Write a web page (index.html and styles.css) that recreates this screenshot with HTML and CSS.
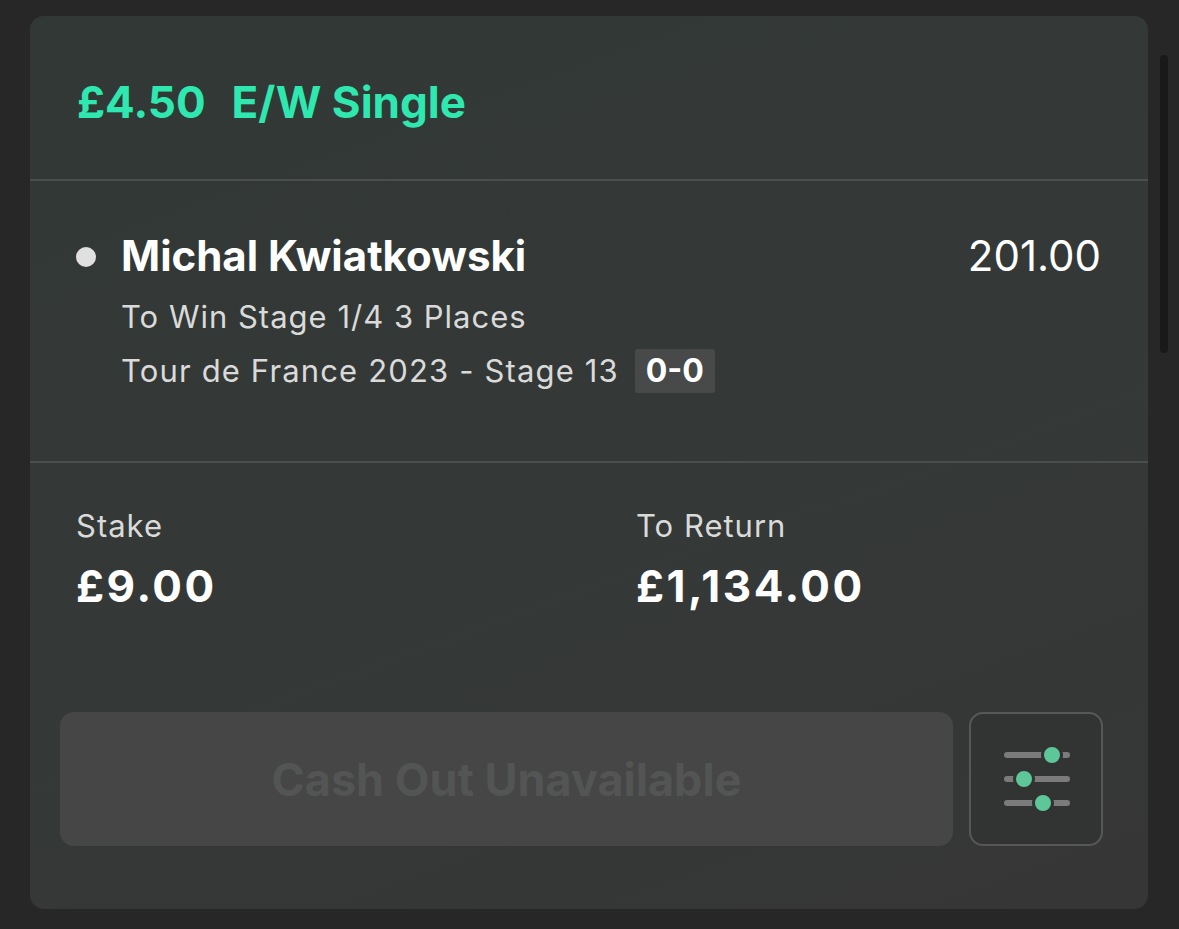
FILE: index.html
```html
<!DOCTYPE html>
<html lang="en">
<head>
<meta charset="utf-8">
<title>E/W Single</title>
<link rel="stylesheet" href="styles.css">
</head>
<body>
<div class="page">
  <div class="card">
    <div class="header">
      <span class="amount">£4.50</span><span class="type">E/W Single</span>
    </div>
    <div class="selection">
      <div class="dot"></div>
      <div class="info">
        <div class="name-row">
          <span class="name">Michal Kwiatkowski</span>
          <span class="odds">201.00</span>
        </div>
        <div class="market">To Win Stage 1/4 3 Places</div>
        <div class="event">Tour de France 2023 - Stage 13<span class="score">0-0</span></div>
      </div>
    </div>
    <div class="totals">
      <div class="col">
        <div class="label">Stake</div>
        <div class="value">£9.00</div>
      </div>
      <div class="col">
        <div class="label">To Return</div>
        <div class="value">£1,134.00</div>
      </div>
    </div>
    <div class="actions">
      <button class="cashout" disabled>Cash Out Unavailable</button>
      <button class="settings" aria-label="Settings">
        <svg width="130" height="130" viewBox="0 0 130 130">
          <g stroke="#7b7b7b" stroke-width="6" stroke-linecap="round">
            <line x1="36" y1="41" x2="96" y2="41"/>
            <line x1="36" y1="65" x2="96" y2="65"/>
            <line x1="36" y1="89" x2="96" y2="89"/>
          </g>
          <g fill="#5ec79a" stroke="#323433" stroke-width="3">
            <circle cx="81" cy="41" r="9.5"/>
            <circle cx="53" cy="65" r="9.5"/>
            <circle cx="72" cy="89" r="9.5"/>
          </g>
        </svg>
      </button>
    </div>
  </div>
  <div class="scrollbar"></div>
</div>
</body>
</html>
```

FILE: styles.css
```css
* { box-sizing: border-box; }
html, body {
  margin: 0;
  padding: 0;
  background: #272727;
  width: 1179px;
  height: 929px;
  overflow: hidden;
  font-family: Inter, "Liberation Sans", sans-serif;
}
.page {
  display: flex;
  align-items: flex-start;
  gap: 12px;
  padding: 16px 0 0 30px;
}
.card {
  width: 1118px;
  height: 893px;
  border-radius: 14px;
  background: linear-gradient(160deg, #323836 0%, #343937 50%, #363636 100%);
  display: flex;
  flex-direction: column;
}
.scrollbar {
  width: 8px;
  height: 298px;
  margin-top: 39px;
  border-radius: 4px;
  background: #191919;
}
.header {
  height: 165px;
  padding: 64px 0 0 47px;
  border-bottom: 2px solid #4a4e4c;
  color: #2ee8b0;
  font-size: 44px;
  line-height: 1;
  font-weight: 700;
}
.header .type { margin-left: 26px; }
.selection {
  height: 282px;
  border-bottom: 2px solid #4a4e4c;
  display: flex;
  padding: 54px 47px 0 46px;
}
.dot {
  width: 20px;
  height: 20px;
  border-radius: 50%;
  background: #e0e0e0;
  margin-top: 12px;
  flex: none;
}
.info {
  flex: 1;
  margin-left: 25px;
  display: flex;
  flex-direction: column;
}
.name-row {
  display: flex;
  justify-content: space-between;
  align-items: baseline;
  font-size: 42px;
  line-height: 1;
  color: #ffffff;
}
.name { font-weight: 700; }
.odds { font-weight: 400; }
.market {
  margin-top: 24px;
  font-size: 31px;
  letter-spacing: 1px;
  line-height: 1;
  color: #dadada;
}
.event {
  margin-top: 17px;
  font-size: 31px;
  letter-spacing: 1.15px;
  line-height: 1;
  color: #dadada;
}
.score {
  display: inline-block;
  width: 80px;
  margin-left: 16px;
  line-height: 44px;
  text-align: center;
  letter-spacing: 0;
  background: #474a48;
  color: #ffffff;
  font-weight: 700;
  font-size: 32px;
  border-radius: 3px;
}
.totals {
  display: grid;
  grid-template-columns: 560px 1fr;
  padding: 47px 0 0 46px;
}
.label {
  font-size: 31px;
  letter-spacing: 1px;
  line-height: 1;
  color: #dadada;
}
.value {
  margin-top: 23px;
  font-size: 44px;
  letter-spacing: 2.5px;
  line-height: 1;
  font-weight: 700;
  color: #ffffff;
}
.actions {
  display: flex;
  gap: 16px;
  padding: 0 45px 0 30px;
  margin-top: auto;
  margin-bottom: 63px;
}
.cashout {
  flex: 1;
  height: 134px;
  border: none;
  border-radius: 14px;
  background: #464646;
  color: #535454;
  font-family: inherit;
  font-size: 45px;
  font-weight: 700;
  padding: 0;
}
.settings {
  width: 134px;
  height: 134px;
  border: 2px solid #575757;
  border-radius: 14px;
  background: #323433;
  padding: 0;
  display: flex;
  align-items: center;
  justify-content: center;
}
.settings svg { display: block; }
```
